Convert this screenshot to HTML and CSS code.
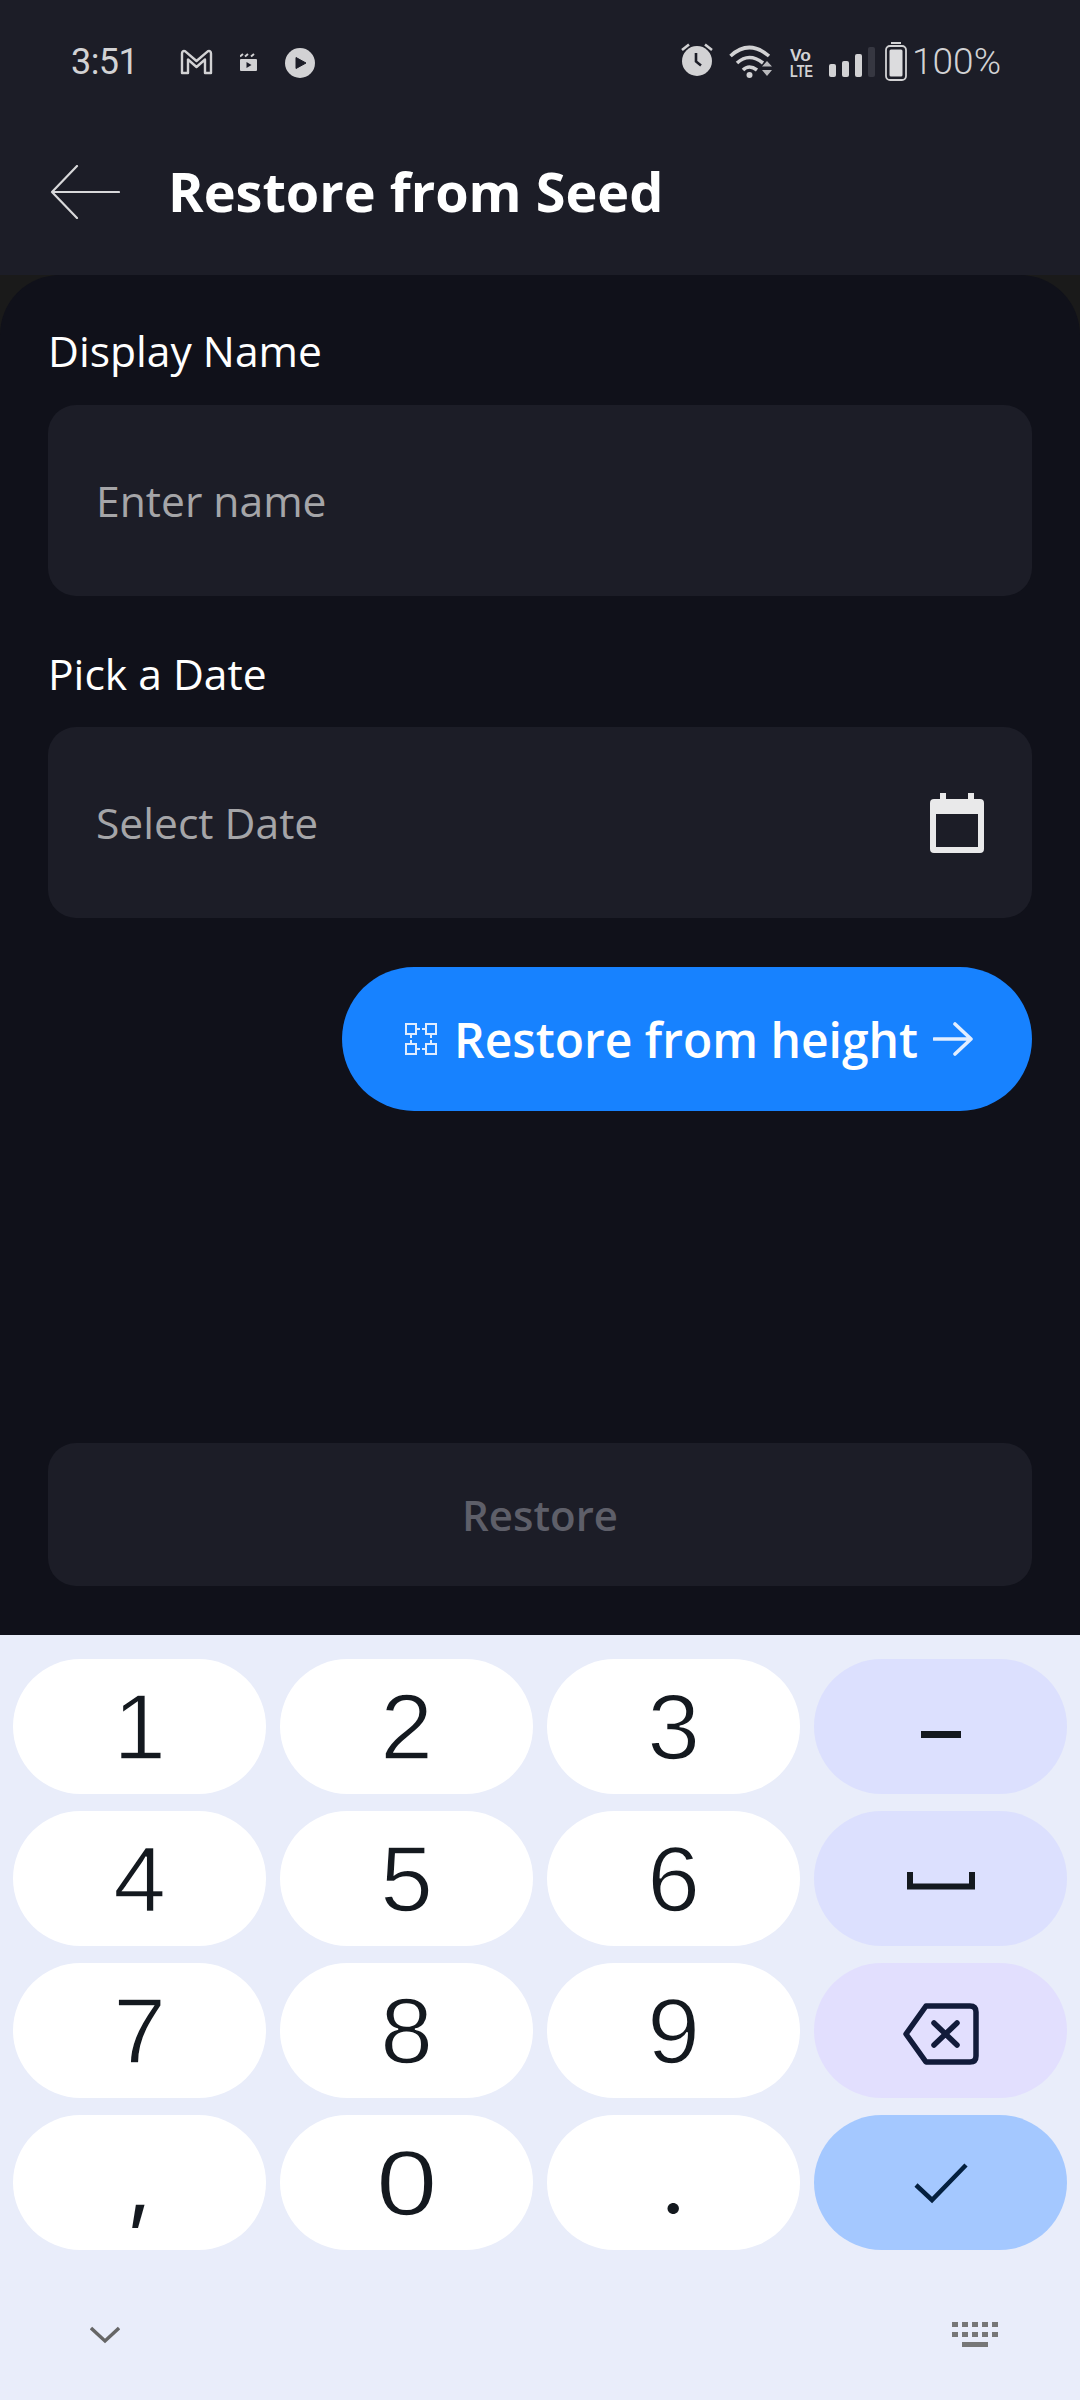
FILE: index.html
```html
<!DOCTYPE html>
<html>
<head>
<meta charset="utf-8">
<title>Restore from Seed</title>
<link rel="stylesheet" href="styles.css">
</head>
<body>
<div class="page">
  <div class="top">
    <div class="status">
      <div class="status-left">
        <span class="time">3:51</span>
        <svg class="ic-gmail" width="33" height="26" viewBox="0 0 33 26"><path d="M2 24V4.5Q2 1.5 5 2.2L16.5 12 28 2.2Q31 1.5 31 4.5V24H25V10.5L16.5 18 8 10.5V24Z" fill="none" stroke="#d2d2d4" stroke-width="2.4" stroke-linejoin="round"/></svg>
        <svg class="ic-clap" width="17" height="18" viewBox="0 0 17 18"><path d="M0 3.5L3 1M5 3.5L8 1M11 3.5L14 1" stroke="#d2d2d4" stroke-width="2" fill="none"/><path d="M1 6H16Q17 6 17 7V17Q17 18 16 18H1Q0 18 0 17V7Q0 6 1 6ZM6.5 9V15L11.5 12Z" fill="#d2d2d4" fill-rule="evenodd"/></svg>
        <svg class="ic-play" width="30" height="30" viewBox="0 0 30 30"><circle cx="15" cy="15" r="15" fill="#d2d2d4"/><path d="M11 9.5V20.5L21 15Z" fill="#1c1d27" stroke="#1c1d27" stroke-width="1" stroke-linejoin="round"/></svg>
      </div>
      <div class="status-right">
        <svg width="32" height="34" viewBox="0 0 32 34"><path d="M1 8L8 2.5M31 8L24 2.5" stroke="#d2d2d4" stroke-width="2.6" fill="none"/><circle cx="16" cy="19" r="15" fill="#d2d2d4"/><path d="M15 11V19.5L20 23.5" stroke="#1c1d27" stroke-width="2.6" fill="none"/></svg>
        <svg class="ic-wifi" width="45" height="34" viewBox="0 0 45 34"><g fill="none" stroke="#d2d2d4" stroke-width="3.6"><path d="M1.5 12Q20 -5 40 12"/><path d="M8 19Q20 8 34 19"/><path d="M14 26Q20 20 28 26"/></g><circle cx="20.5" cy="31" r="3" fill="#d2d2d4"/><path d="M33 22.5L38 17L43 22.5ZM33 26H43L38 32Z" fill="#b9b9bc"/></svg>
        <svg class="ic-volte" width="23" height="38" viewBox="0 0 23 38"><text x="0" y="14" class="volte-text" textLength="21" lengthAdjust="spacingAndGlyphs">Vo</text><text x="0" y="30" class="volte-text" textLength="23" lengthAdjust="spacingAndGlyphs">LTE</text></svg>
        <div class="signal"><i class="b1"></i><i class="b2"></i><i class="b3"></i><i class="b4"></i></div>
        <svg class="ic-batt" width="22" height="39" viewBox="0 0 22 39"><rect x="6" y="0" width="10" height="2" fill="#d2d2d4"/><rect x="1" y="4" width="20" height="34" rx="4" fill="none" stroke="#d2d2d4" stroke-width="1.8"/><rect x="4.5" y="7.5" width="13" height="27" rx="1.5" fill="#dcdcde"/></svg>
        <span class="pct">100%</span>
      </div>
    </div>
    <div class="toolbar">
      <svg class="back" width="70" height="54" viewBox="0 0 70 54"><path d="M69 27H2M27 1L2 27L27 53" fill="none" stroke="#d8d8da" stroke-width="2.2" stroke-linecap="round" stroke-linejoin="round"/></svg>
      <h1 class="title">Restore from Seed</h1>
    </div>
  </div>

  <div class="backdrop">
    <div class="main">
      <div class="form">
        <label class="lbl">Display Name</label>
        <div class="field"><span class="hint">Enter name</span></div>
        <label class="lbl lbl-date">Pick a Date</label>
        <div class="field">
          <span class="hint">Select Date</span>
          <svg width="54" height="60" viewBox="0 0 54 60"><path d="M10 0H16V6H38V0H44V6H50Q54 6 54 10V56Q54 60 50 60H4Q0 60 0 56V10Q0 6 4 6H10ZM6 21V54H48V21Z" fill="#e9e9ea" fill-rule="evenodd"/></svg>
        </div>
        <div class="height-row">
          <button class="height-btn">
            <svg class="ic-net" width="32" height="32" viewBox="0 0 32 32"><g fill="none" stroke="#dfecff" stroke-width="2"><rect x="1" y="1" width="10" height="10"/><rect x="21" y="1" width="10" height="10"/><rect x="1" y="21" width="10" height="10"/><rect x="21" y="21" width="10" height="10"/><path d="M11 6H15M21 6H17M6 11V15M26 11V15M6 21V17M26 21V17M11 26H15M21 26H17"/></g></svg>
            <span>Restore from height</span>
            <svg class="ic-next" width="40" height="34" viewBox="0 0 40 34"><path d="M1 17H37M22 2L38 17L22 32" fill="none" stroke="#e3eeff" stroke-width="3.6" stroke-linecap="round" stroke-linejoin="round"/></svg>
          </button>
        </div>
      </div>
      <button class="restore-btn">Restore</button>
    </div>
  </div>

  <div class="keyboard">
    <div class="keys">
      <div class="key"><span>1</span></div>
      <div class="key"><span>2</span></div>
      <div class="key"><span>3</span></div>
      <div class="key key-fn"><svg class="ic-dash" width="40" height="7" viewBox="0 0 40 7"><rect width="40" height="7" fill="#14191f"/></svg></div>
      <div class="key"><span>4</span></div>
      <div class="key"><span>5</span></div>
      <div class="key"><span>6</span></div>
      <div class="key key-fn"><svg class="ic-space" width="68" height="18" viewBox="0 0 68 18"><path d="M3 0V14.500H65V0" fill="none" stroke="#14191f" stroke-width="6"/></svg></div>
      <div class="key"><span>7</span></div>
      <div class="key"><span>8</span></div>
      <div class="key"><span>9</span></div>
      <div class="key key-del"><svg class="ic-del" width="76" height="62" viewBox="0 0 76 62"><path d="M23 3H67Q73 3 73 9V53Q73 59 67 59H23L3 31Z" fill="none" stroke="#121b3a" stroke-width="5.500" stroke-linejoin="round"/><path d="M31 20L54 42M54 20L31 42" stroke="#121b3a" stroke-width="5.500" stroke-linecap="round"/></svg></div>
      <div class="key key-punct"><span>,</span></div>
      <div class="key key-zero"><span>0</span></div>
      <div class="key key-punct"><span>.</span></div>
      <div class="key key-enter"><svg width="54" height="42" viewBox="0 0 54 42"><path d="M2 23L18 38L52 3" fill="none" stroke="#04203f" stroke-width="4.5"/></svg></div>
    </div>
    <div class="kb-bottom">
      <svg width="30" height="18" viewBox="0 0 30 18"><path d="M1 2L15 15L29 2" fill="none" stroke="#666" stroke-width="3.4"/></svg>
      <svg width="46" height="25" viewBox="0 0 46 25"><g fill="#777"><rect x="0" y="0" width="6" height="5"/><rect x="10" y="0" width="6" height="5"/><rect x="20" y="0" width="6" height="5"/><rect x="30" y="0" width="6" height="5"/><rect x="40" y="0" width="6" height="5"/><rect x="0" y="10" width="6" height="5"/><rect x="10" y="10" width="6" height="5"/><rect x="20" y="10" width="6" height="5"/><rect x="30" y="10" width="6" height="5"/><rect x="40" y="10" width="6" height="5"/><rect x="10" y="20" width="26" height="5"/></g></svg>
    </div>
  </div>
</div>
</body>
</html>
```

FILE: styles.css
```css
* {
	box-sizing: border-box;
}
html, body {
	margin: 0;
	padding: 0;
}
body {
	font-family: "Open Sans", sans-serif;
}
.page {
	width: 1080px;
	height: 2400px;
	display: flex;
	flex-direction: column;
	overflow: hidden;
}
.top {
	height: 275px;
	background: #1c1d27;
}
.status {
	height: 82px;
	padding: 42px 79px 0 71px;
	display: flex;
	justify-content: space-between;
}
.status-left {
	display: flex;
	align-items: flex-start;
}
.time {
	font-family: Roboto, sans-serif;
	font-size: 36px;
	line-height: 40px;
	letter-spacing: -0.6px;
	color: #d2d2d4;
	width: 109px;
}
.ic-gmail {
	margin-top: 7px;
	margin-right: 27px;
}
.ic-clap {
	margin-top: 11px;
	margin-right: 28px;
}
.ic-play {
	margin-top: 6px;
}
.status-right {
	display: flex;
	align-items: flex-start;
}
.ic-wifi {
	margin-left: 16px;
	margin-top: 2px;
}
.ic-volte {
	margin-left: 16px;
	margin-top: 5px;
	overflow: visible;
}
.volte-text {
	font-family: "Liberation Sans", sans-serif;
	font-size: 17px;
	font-weight: 700;
	fill: #d2d2d4;
}
.signal {
	display: flex;
	align-items: flex-end;
	gap: 6px;
	height: 30px;
	margin-left: 16px;
	margin-top: 5px;
}
.signal i {
	display: block;
	width: 7px;
	background: #d2d2d4;
	border-radius: 2px;
}
.signal .b1 { height: 13px; }
.signal .b2 { height: 16px; }
.signal .b3 { height: 23px; }
.signal .b4 { height: 30px; background: #363741; }
.ic-batt {
	margin-left: 10px;
}
.pct {
	font-family: Roboto, sans-serif;
	font-size: 37px;
	line-height: 40px;
	font-weight: 300;
	color: #d2d2d4;
	margin-left: 5px;
}
.toolbar {
	display: flex;
	align-items: center;
	height: 193px;
	padding: 27px 0 0 50px;
}
.title {
	margin: 0 0 2px 48px;
	font-size: 54px;
	line-height: 70px;
	font-weight: 700;
	color: #fff;
}
.backdrop {
	flex: 1;
	background: #1a1a1a;
}
.main {
	height: 100%;
	background: #10111a;
	border-radius: 60px 60px 0 0;
	padding: 51px 48px 49px;
	display: flex;
	flex-direction: column;
	justify-content: space-between;
}
.lbl {
	display: block;
	font-size: 42.6px;
	line-height: 48px;
	color: #fff;
	margin-bottom: 31px;
}
.lbl-date {
	margin-top: 53px;
	margin-bottom: 30px;
}
.field {
	height: 191px;
	background: #1c1d27;
	border-radius: 28px;
	padding: 0 48px;
	display: flex;
	align-items: center;
	justify-content: space-between;
}
.hint {
	font-size: 42.6px;
	color: #a5a5a8;
	margin-bottom: 2px;
}
.height-row {
	display: flex;
	justify-content: flex-end;
	margin-top: 49px;
}
.height-btn {
	width: 690px;
	height: 144px;
	border: 0;
	border-radius: 72px;
	background: #1782ff;
	color: #fff;
	font-family: "Open Sans", sans-serif;
	font-size: 48px;
	font-weight: 600;
	display: flex;
	align-items: center;
	padding: 0 0 0 63px;
}
.ic-net {
	margin-right: 17px;
}
.ic-next {
	margin-left: 15px;
}
.restore-btn {
	height: 143px;
	border: 0;
	border-radius: 28px;
	background: #1c1d27;
	color: #5e5f69;
	font-family: "Open Sans", sans-serif;
	font-size: 42px;
	font-weight: 600;
}
.keyboard {
	height: 765px;
	background: #e9edfa;
	padding: 24px 13px 0;
}
.keys {
	display: grid;
	grid-template-columns: repeat(4, 253px);
	grid-auto-rows: 135px;
	column-gap: 14px;
	row-gap: 17px;
}
.key {
	background: #fff;
	border-radius: 68px;
	display: flex;
	align-items: center;
	justify-content: center;
	font-family: "Liberation Sans", sans-serif;
	font-size: 92px;
	line-height: 1;
	color: #14191f;
}
/* thin the Liberation digits down to the keyboard's lighter weight */
.key span {
	display: inline-block;
	transform: scaleX(1.03);
	-webkit-text-stroke: 1.5px #fff;
}
.key-zero span {
	transform: scaleX(1.2);
}
.key-punct {
	font-family: Inter, sans-serif;
	font-size: 84px;
}
.key-punct span {
	-webkit-text-stroke: 0;
}
.key-fn {
	background: #dce0fe;
}
.key-del {
	background: #e2dffe;
}
.key-enter {
	background: #a4c8ff;
}
.ic-dash {
	margin-top: 15px;
}
.ic-space {
	margin-top: 4px;
}
.ic-del {
	margin-top: 6px;
}
.kb-bottom {
	display: flex;
	justify-content: space-between;
	align-items: center;
	padding: 72px 69px 0 77px;
}
```
